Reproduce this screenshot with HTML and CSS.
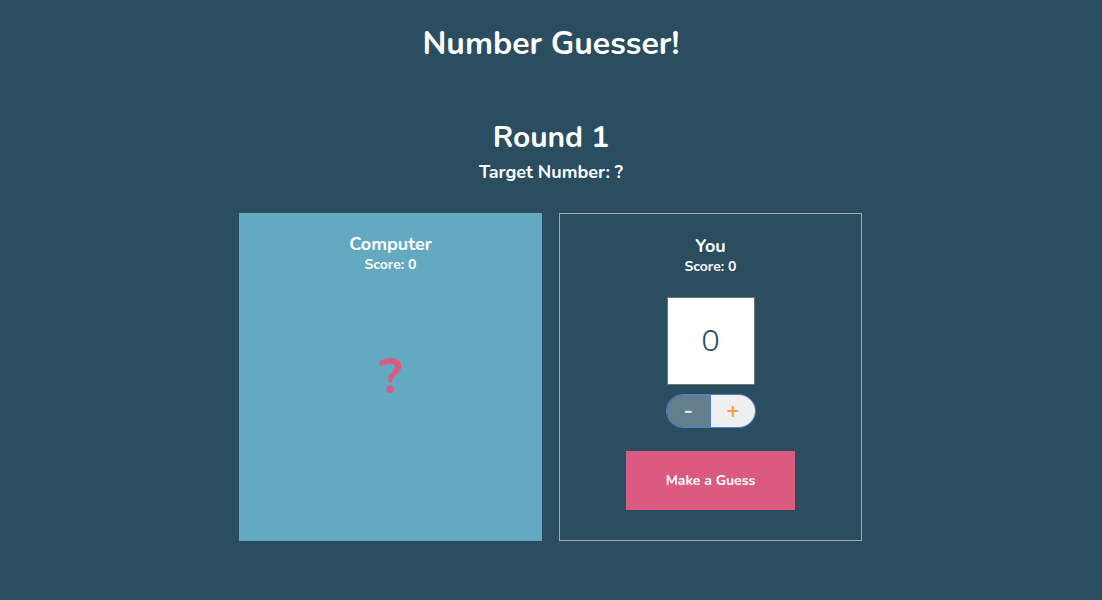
FILE: index.html
```html
<!DOCTYPE html>
<html>
<head>
<meta charset="utf-8">
<link rel="stylesheet" href="styles.css">
</head>
<body>
<header class="header"><h1 class="title">Number Guesser!</h1></header>
<section class="round">
  <h2 class="round-title">Round 1</h2>
  <p class="target">Target Number: ?</p>
</section>
<main class="cards">
  <div class="card computer">
    <h3 class="card-title">Computer</h3>
    <p class="score">Score: 0</p>
    <div class="mystery">?</div>
  </div>
  <div class="card human">
    <h3 class="card-title">You</h3>
    <p class="score">Score: 0</p>
    <div class="guess-box">0</div>
    <div class="stepper">
      <button class="step minus">-</button>
      <button class="step plus">+</button>
    </div>
    <button class="guess-btn">Make a Guess</button>
  </div>
</main>
</body>
</html>
```
FILE: styles.css
```css
* { box-sizing: border-box; }
body {
  margin: 0;
  background: #2a4d5f;
  color: #ffffff;
  font-family: "Nunito", "Lato", "Open Sans", sans-serif;
}
.header { padding-top: 24px; text-align: center; }
.title { margin: 0; font-size: 32px; line-height: 40px; font-weight: 700; }
.round { margin-top: 56px; text-align: center; }
.round-title { margin: 0; font-size: 30px; line-height: 36px; font-weight: 700; }
.target { margin: 5px 0 0; font-size: 18px; line-height: 22px; font-weight: 700; }
.cards {
  margin-top: 30px;
  display: flex;
  justify-content: center;
  gap: 17px;
  padding-right: 1px;
}
.card {
  width: 303px;
  height: 328px;
  display: flex;
  flex-direction: column;
  align-items: center;
  padding-top: 19px;
}
.computer { background: #63a9c1; }
.human { border: 1px solid #a3a9ad; padding-top: 20px; }
.card-title { margin: 0; font-size: 18px; line-height: 24px; font-weight: 700; }
.score { margin: 0; font-size: 14px; line-height: 18px; font-weight: 700; }
.mystery {
  margin-top: 78px;
  font-size: 50px;
  line-height: 50px;
  font-weight: 700;
  color: #db5a80;
}
.guess-box {
  margin-top: 21px;
  width: 88px;
  height: 88px;
  background: #ffffff;
  border: 1px solid #6f767a;
  color: #2a4d5f;
  font-size: 31px;
  font-weight: 300;
  display: flex;
  align-items: center;
  justify-content: center;
}
.stepper {
  margin-top: 9px;
  width: 90px;
  height: 34px;
  display: flex;
  border: 1.5px solid #4f80d8;
  border-radius: 17px;
  overflow: hidden;
}
.step {
  flex: 1;
  border: none;
  margin: 0;
  padding: 0;
  font-family: inherit;
  font-size: 22px;
  font-weight: 700;
}
.minus { background: #647e8b; color: #e4e4e4; border-right: 1.5px solid #4f80d8; }
.plus { background: #efefef; color: #f5a048; }
.guess-btn {
  margin-top: 23px;
  width: 169px;
  height: 59px;
  border: none;
  background: #db5a80;
  color: #ffffff;
  font-family: inherit;
  font-size: 14px;
  font-weight: 700;
}
```
